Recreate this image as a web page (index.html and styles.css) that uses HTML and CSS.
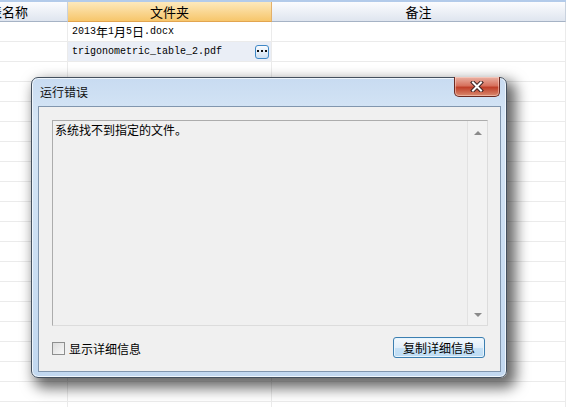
FILE: index.html
```html
<!DOCTYPE html>
<html lang="zh-CN">
<head>
  <meta charset="UTF-8" />
  <title>运行错误</title>
  <link rel="stylesheet" href="styles.css">
</head>
<body>

  <div class="grid">
    <div class="hd first"><span>表名称</span></div>
    <div class="hd sel">文件夹</div>
    <div class="hd">备注</div>

    <div class="cell"></div>
    <div class="cell txt"><span class="asc">2013</span>年<span class="asc">1</span>月<span class="asc">5</span>日<span class="asc">.docx</span></div>
    <div class="cell"></div>

    <div class="cell"></div>
    <div class="cell txt active">
      <span class="asc">trigonometric_table_2.pdf</span>
      <span class="more">
        <svg width="10" height="3" viewBox="0 0 10 3">
          <rect x="0" y="0" width="2" height="2" fill="#111"/>
          <rect x="4" y="0" width="2" height="2" fill="#111"/>
          <rect x="8" y="0" width="2" height="2" fill="#111"/>
        </svg>
      </span>
    </div>
    <div class="cell"></div>
  </div>

  <div class="dialog">
    <div class="titlebar">
      <span class="title">运行错误</span>
      <span class="close">
        <svg width="14" height="11" viewBox="0 0 14 11">
          <path d="M3 1.5 L11 9.5 M11 1.5 L3 9.5" stroke="#3d2424" stroke-width="4" stroke-linecap="square"/>
          <path d="M3 1.5 L11 9.5 M11 1.5 L3 9.5" stroke="#fff" stroke-width="2" stroke-linecap="square"/>
        </svg>
      </span>
    </div>
    <div class="client">
      <div class="msgbox">
        <div class="msg">系统找不到指定的文件。</div>
        <div class="scroll">
          <span class="arrow up"></span>
          <span class="arrow down"></span>
        </div>
      </div>
      <div class="footer">
        <label class="check"><span class="box"></span>显示详细信息</label>
        <button class="btn">复制详细信息</button>
      </div>
    </div>
  </div>

  <script>
    // fill the rest of the grid with empty rows
    const grid = document.querySelector(".grid");
    for (let i = 0; i < 18; i++) {
      for (let c = 0; c < 3; c++) {
        const d = document.createElement("div");
        d.className = "cell";
        grid.appendChild(d);
      }
    }
  </script>
</body>
</html>
```

FILE: styles.css
```css
body {
  margin: 0;
  width: 566px;
  height: 407px;
  overflow: hidden;
  background: #fff;
  font-family: "Noto Sans CJK SC", sans-serif;
  font-size: 12px;
  color: #000;
  position: relative;
}

.grid {
  display: grid;
  grid-template-columns: 68px 204px 1fr;
  grid-auto-rows: 20px;
  border-top: 2px solid #b3cbea;
}

.hd {
  height: 20px;
  line-height: 20px;
  text-align: center;
  font-size: 13px;
  background: linear-gradient(#fbfcfe, #dfe5ef);
  border-bottom: 1px solid #a6b3c5;
  border-right: 1px solid #c9d2de;
  box-sizing: border-box;
  white-space: nowrap;
  overflow: hidden;
}

.hd.first {
  display: flex;
  justify-content: flex-end;
  padding-right: 39px;
}

.hd.first span {
  flex-shrink: 0;
}

.hd.sel {
  background: linear-gradient(#fde9bd, #f7c66b);
  border-bottom: 1px solid #e2a550;
  border-right: 1px solid #e3b06a;
}

.cell {
  border-bottom: 1px solid #ebebeb;
  border-right: 1px solid #ebebeb;
  box-sizing: border-box;
}

.txt {
  padding-left: 4px;
  line-height: 19px;
  white-space: nowrap;
  display: flex;
  align-items: center;
}

.asc {
  font-family: "Liberation Mono", monospace;
  font-size: 10px;
}

.active {
  background: #eaeef6;
}

.more {
  margin-left: auto;
  margin-right: 2px;
  width: 14px;
  height: 14px;
  box-sizing: border-box;
  border: 1px solid #3f88c6;
  border-radius: 3px;
  background: linear-gradient(#fafcff, #cfe0f1);
  display: flex;
  align-items: center;
  justify-content: center;
}

.dialog {
  position: absolute;
  left: 31px;
  top: 77px;
  width: 476px;
  height: 301px;
  box-sizing: border-box;
  border: 1px solid #44505e;
  border-radius: 7px;
  background: linear-gradient(#c8dbf1, #d6e6f6 40px, #c2d8f0);
  box-shadow: 6px 7px 14px 3px rgba(0, 0, 0, 0.6), inset 0 0 0 1px #eef5fc;
  padding: 0 5px 5px 6px;
  display: flex;
  flex-direction: column;
}

.titlebar {
  height: 28px;
  display: flex;
  align-items: flex-start;
  flex-shrink: 0;
}

.title {
  margin-top: 5px;
  margin-left: 2px;
  font-size: 12px;
  color: #111;
}

.close {
  margin-left: auto;
  margin-top: -1px;
  margin-right: 1px;
  width: 46px;
  height: 20px;
  box-sizing: border-box;
  border: 1px solid #6b2a22;
  border-top: none;
  border-radius: 0 0 5px 5px;
  background: linear-gradient(#eab2a4, #d7725e 45%, #c0402a 55%, #d98a6f);
  box-shadow: inset 0 0 0 1px rgba(255, 220, 210, 0.5);
  display: flex;
  align-items: center;
  justify-content: center;
}

.client {
  flex: 1;
  background: #f0f0f0;
  border: 1px solid #8196ae;
  display: flex;
  flex-direction: column;
  padding: 13px 12px 0 13px;
}

.msgbox {
  height: 206px;
  box-sizing: border-box;
  border: 1px solid #acacac;
  border-right-color: #dcdcdc;
  border-bottom-color: #dcdcdc;
  background: #f0f0f0;
  display: flex;
}

.msg {
  flex: 1;
  padding: 1px 2px;
  line-height: 16px;
}

.scroll {
  width: 19px;
  border-left: 1px solid #e2e2e2;
  background: #f2f2f2;
  position: relative;
}

.arrow {
  position: absolute;
  left: 6px;
  width: 0;
  height: 0;
  border-left: 4px solid transparent;
  border-right: 4px solid transparent;
}

.arrow.up {
  top: 10px;
  border-bottom: 4px solid #8a8a8a;
}

.arrow.down {
  bottom: 8px;
  border-top: 4px solid #8a8a8a;
}

.footer {
  display: flex;
  align-items: center;
  justify-content: space-between;
  margin-top: 11px;
  padding-right: 3px;
}

.check {
  display: flex;
  align-items: center;
  gap: 4px;
  font-size: 12px;
  margin-top: 1px;
}

.box {
  width: 11px;
  height: 11px;
  border: 1px solid #8e8f8f;
  background: linear-gradient(135deg, #dcdcdc, #f8f8f8);
}

.btn {
  width: 92px;
  height: 21px;
  padding: 0;
  font-family: "Noto Sans CJK SC", sans-serif;
  font-size: 12px;
  color: #000;
  border: 1px solid #3c7fb1;
  border-radius: 3px;
  background: linear-gradient(#f3f9fd, #e2effa 50%, #c6e1f6 51%, #bddcf4);
  box-shadow: inset 0 0 0 1px #e8f4fc;
}
```
